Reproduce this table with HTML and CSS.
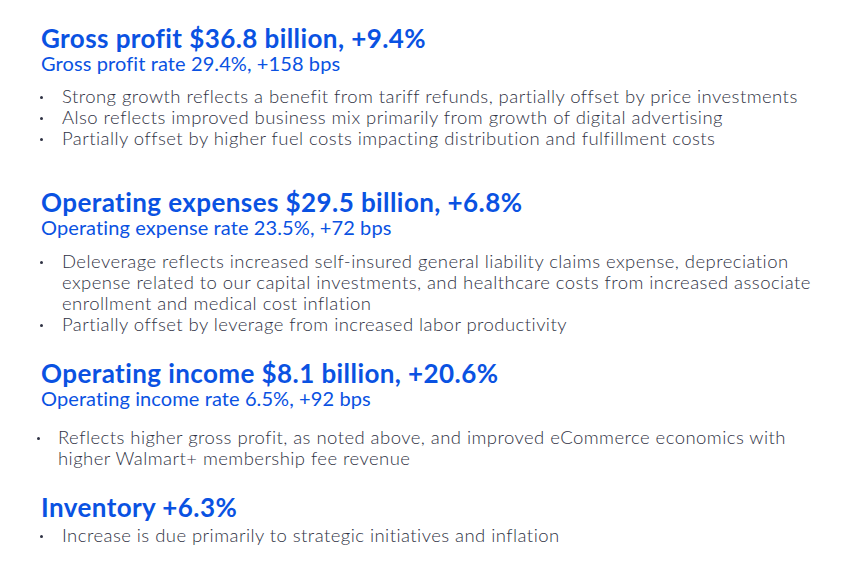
FILE: index.html
```html
<!DOCTYPE html>
<html lang="en">
<head>
<meta charset="utf-8">
<title>Financial highlights</title>
<link rel="stylesheet" href="styles.css">
</head>
<body>
<main class="slide">
  <section class="block block-gross">
    <h2 class="title">Gross profit $36.8 billion, +9.4%</h2>
    <p class="sub">Gross profit rate 29.4%, +158 bps</p>
    <ul class="points">
      <li>Strong growth reflects a benefit from tariff refunds, partially offset by price investments</li>
      <li>Also reflects improved business mix primarily from growth of digital advertising</li>
      <li>Partially offset by higher fuel costs impacting distribution and fulfillment costs</li>
    </ul>
  </section>
  <section class="block block-opex">
    <h2 class="title">Operating expenses $29.5 billion, +6.8%</h2>
    <p class="sub">Operating expense rate 23.5%, +72 bps</p>
    <ul class="points">
      <li>Deleverage reflects increased self-insured general liability claims expense, depreciation expense related to our capital investments, and healthcare costs from increased associate enrollment and medical cost inflation</li>
      <li>Partially offset by leverage from increased labor productivity</li>
    </ul>
  </section>
  <section class="block block-opinc">
    <h2 class="title">Operating income $8.1 billion, +20.6%</h2>
    <p class="sub">Operating income rate 6.5%, +92 bps</p>
    <ul class="points points-tight">
      <li>Reflects higher gross profit, as noted above, and improved eCommerce economics with higher Walmart+ membership fee revenue</li>
    </ul>
  </section>
  <section class="block block-inv">
    <h2 class="title">Inventory +6.3%</h2>
    <ul class="points">
      <li>Increase is due primarily to strategic initiatives and inflation</li>
    </ul>
  </section>
</main>
</body>
</html>
```

FILE: styles.css
```css
html, body {
  margin: 0;
  padding: 0;
  background: #ffffff;
}

body {
  font-family: "Lato", "Liberation Sans", sans-serif;
  width: 862px;
  height: 564px;
  overflow: hidden;
}

.slide {
  display: flex;
  flex-direction: column;
  padding: 25px 37px 0 41px;
}

.block {
  display: flex;
  flex-direction: column;
}

.title {
  margin: 0;
  font-size: 26px;
  line-height: 26px;
  font-weight: 700;
  letter-spacing: 0.42px;
  color: #0a52e2;
}

.sub {
  margin: 0;
  font-size: 20px;
  line-height: 24px;
  font-weight: 400;
  letter-spacing: 0.1px;
  color: #0a52e2;
}

.points {
  list-style: none;
  margin: 10.5px 0 0 0;
  padding: 0;
  display: flex;
  flex-direction: column;
  color: #2f3244;
  font-size: 18.5px;
  line-height: 21px;
  font-weight: 300;
  letter-spacing: 0.45px;
}

.points li {
  display: flex;
  align-items: flex-start;
}

.points li::before {
  content: "";
  flex: 0 0 3px;
  width: 3px;
  height: 3px;
  border-radius: 50%;
  background: #2f3244;
  margin: 10px 19px 0 0;
  margin-left: -1px;
}

.block-gross .points {
  margin-top: 10.5px;
  margin-bottom: 40.5px;
}

.block-opex .points {
  margin-top: 11.5px;
  margin-bottom: 25.5px;
}

.block-opinc .points {
  margin-top: 16.5px;
  margin-bottom: 25.5px;
}

.points-tight li::before {
  margin-left: -4px;
  margin-right: 18px;
}

.block-inv .points {
  margin-top: 4.5px;
}
```
